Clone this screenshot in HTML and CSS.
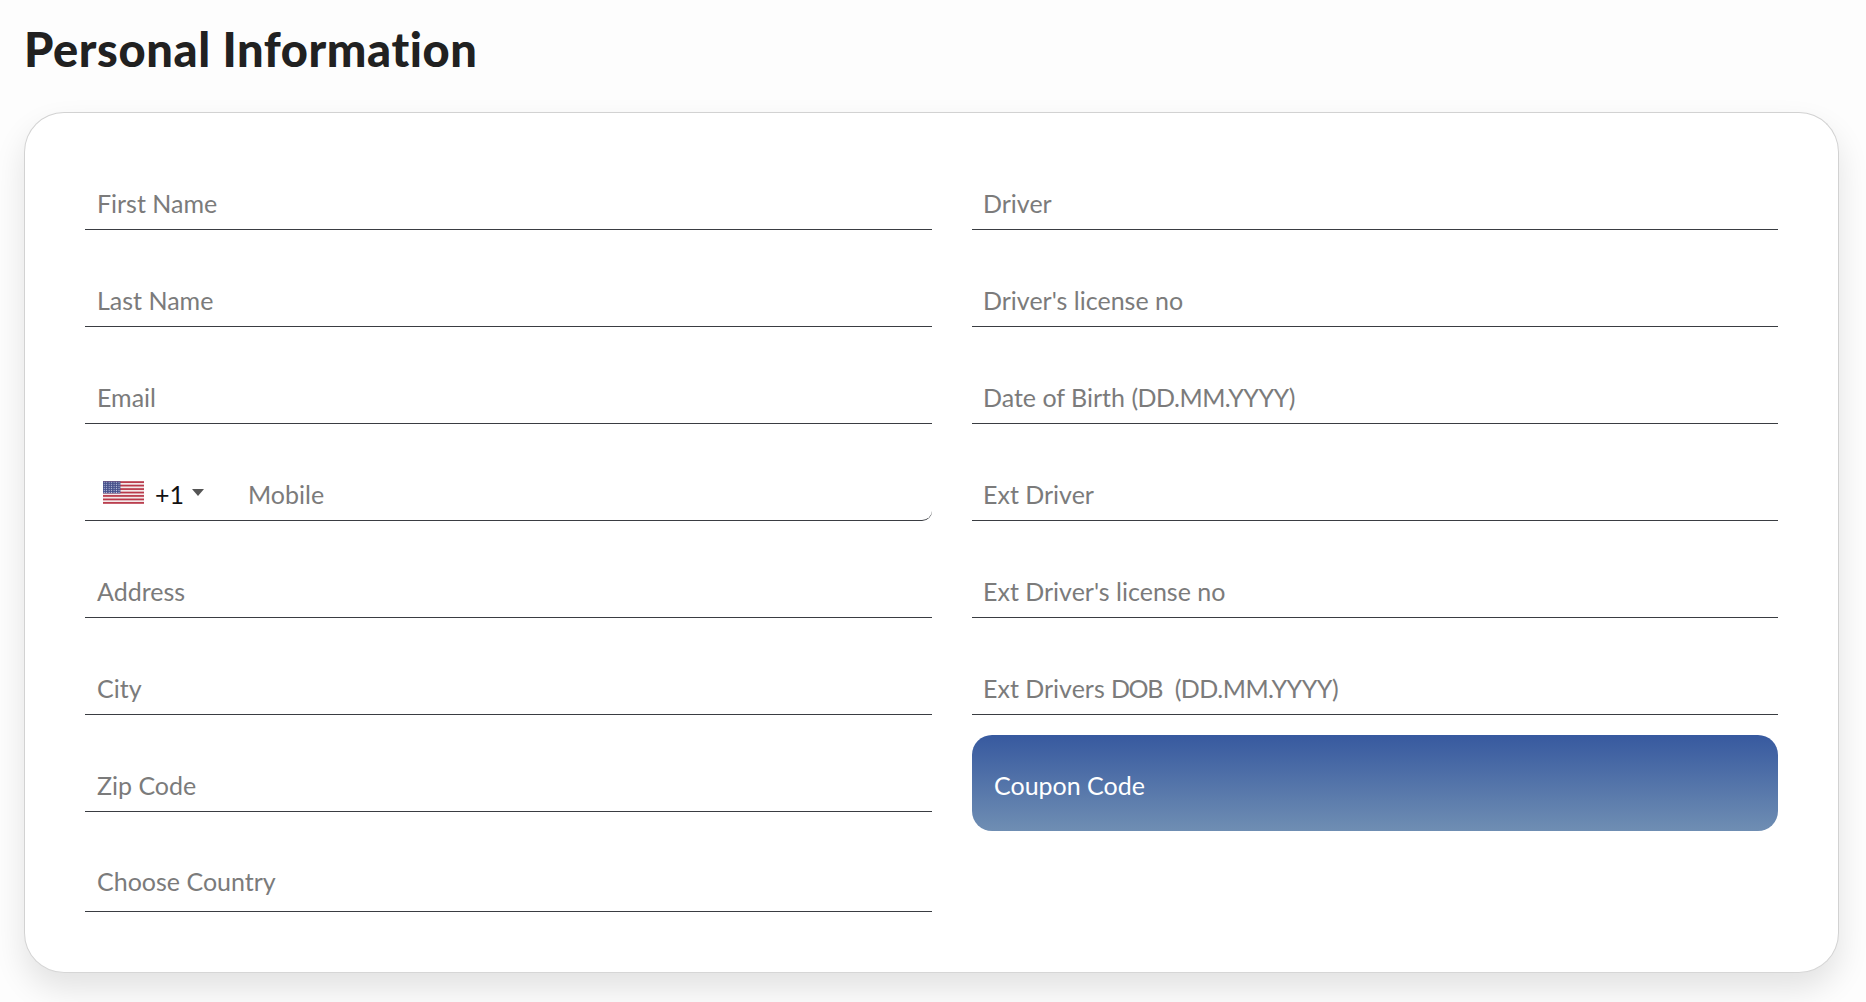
FILE: index.html
```html
<!DOCTYPE html>
<html lang="en">
<head>
<meta charset="utf-8">
<title>Personal Information</title>
<link rel="stylesheet" href="styles.css">
</head>
<body>
<main class="page">
  <h1 class="title">Personal Information</h1>
  <section class="card">
    <div class="col col-left">
      <div class="field"><span class="ph">First Name</span></div>
      <div class="field"><span class="ph">Last Name</span></div>
      <div class="field"><span class="ph">Email</span></div>
      <div class="field field-tel">
        <svg class="flag" viewBox="0 0 40 22" aria-hidden="true">
          <defs>
            <pattern id="stars" width="2.4" height="2" patternUnits="userSpaceOnUse">
              <circle cx="1.2" cy="1" r=".55" fill="#c9cfe4"/>
            </pattern>
          </defs>
          <rect width="40" height="22" fill="#f3e9ea"/>
          <g fill="#b9394a">
            <rect y="0" width="40" height="1.7"/>
            <rect y="3.4" width="40" height="1.7"/>
            <rect y="6.8" width="40" height="1.7"/>
            <rect y="10.2" width="40" height="1.7"/>
            <rect y="13.5" width="40" height="1.7"/>
            <rect y="16.9" width="40" height="1.7"/>
            <rect y="20.3" width="40" height="1.7"/>
          </g>
          <rect width="17" height="11.9" fill="#47518c"/>
          <rect width="17" height="11.9" fill="url(#stars)"/>
        </svg>
        <span class="dial">+1</span>
        <svg class="caret" viewBox="0 0 12 7" aria-hidden="true"><path d="M0 0h12L6 7z" fill="#555"/></svg>
        <span class="ph ph-mobile">Mobile</span>
      </div>
      <div class="field"><span class="ph">Address</span></div>
      <div class="field"><span class="ph">City</span></div>
      <div class="field"><span class="ph">Zip Code</span></div>
      <div class="field field-last"><span class="ph">Choose Country</span></div>
    </div>
    <div class="col col-right">
      <div class="field"><span class="ph">Driver</span></div>
      <div class="field"><span class="ph">Driver's license no</span></div>
      <div class="field"><span class="ph">Date of Birth <span class="caps">(DD.MM.YYYY)</span></span></div>
      <div class="field"><span class="ph">Ext Driver</span></div>
      <div class="field"><span class="ph">Ext Driver's license no</span></div>
      <div class="field"><span class="ph">Ext Drivers <span class="dob">DOB</span>&nbsp; <span class="caps">(DD.MM.YYYY)</span></span></div>
      <button class="coupon" type="button">Coupon Code</button>
    </div>
  </section>
</main>
</body>
</html>
```

FILE: styles.css
```css
* { box-sizing: border-box; }
html, body { margin: 0; height: 100%; }
body {
  background: #fdfdfd;
  font-family: Lato, "Noto Sans", sans-serif;
  font-variant-ligatures: none;
  overflow: hidden;
}
.page { padding: 0 24px; }
.title {
  margin: 0;
  height: 112px;
  padding-top: 20px;
  font-size: 47px;
  line-height: 58px;
  font-weight: 900;
  letter-spacing: .6px;
  color: #212121;
}
.card {
  display: flex;
  gap: 40px;
  width: 1815px;
  height: 861px;
  padding: 20px 60px 0;
  background: #fff;
  border: 1px solid #d2d2d2;
  border-bottom-color: #d6d6d6;
  border-radius: 40px;
  box-shadow: 0 16px 32px rgba(0, 0, 0, .11);
}
.col { display: flex; flex-direction: column; }
.col-left { width: 847px; }
.col-right { width: 806px; }
.field {
  display: flex;
  align-items: center;
  height: 97px;
  padding: 43px 12px 0;
  border-bottom: 1.5px solid #3a3d42;
}
.col-right .field { padding-left: 11px; }
.field-last { height: 100px; padding-top: 42px; padding-bottom: 3px; }
.ph {
  font-size: 25px;
  line-height: 30px;
  color: #7b7b7b;
}
.caps { letter-spacing: -.5px; }
.dob { letter-spacing: -1.5px; }
.field-tel {
  padding-left: 18px;
  border-bottom-right-radius: 10px;
}
.flag { width: 41px; height: 23px; margin-top: -3px; flex: none; }
.dial {
  margin-left: 11px;
  font-size: 25px;
  line-height: 30px;
  color: #111;
}
.caret { width: 12px; height: 7px; margin: -2px 0 0 8px; flex: none; }
.ph-mobile { margin-left: 44px; }
.coupon {
  display: block;
  width: 100%;
  height: 96px;
  margin-top: 20px;
  padding: 3px 0 0 22px;
  border: 0;
  border-radius: 20px;
  background: linear-gradient(180deg, #37599f 0%, #6f8eb3 100%);
  color: #fff;
  font: 25px/30px Lato, "Noto Sans", sans-serif;
  text-align: left;
}
```
